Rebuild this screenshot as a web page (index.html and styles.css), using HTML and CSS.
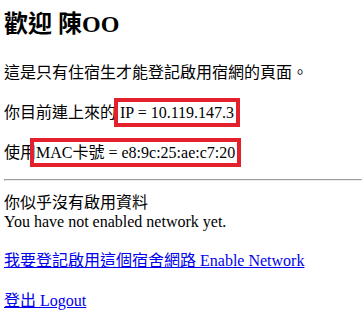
FILE: index.html
```html
<!DOCTYPE html>
<html lang="zh-Hant">
<head>
  <meta charset="UTF-8" />
  <title>宿網登記</title>
  <link rel="stylesheet" href="styles.css">
</head>
<body>

  <h2 class="welcome">歡迎 陳OO</h2>

  <p>這是只有住宿生才能登記啟用宿網的頁面。</p>

  <p>你目前連上來的 <span class="mark">IP = 10.119.147.3</span></p>

  <p>使用<span class="mark">MAC卡號 = e8:9c:25:ae:c7:20</span></p>

  <hr>

  <div class="notice">你似乎沒有啟用資料<br>You have not enabled network yet.</div>

  <p><a href="#">我要登記啟用這個宿舍網路 Enable Network</a></p>

  <p><a href="#">登出 Logout</a></p>

</body>
</html>
```

FILE: styles.css
```css
body {
  margin: 0 0 0 4px;
  font-family: "Liberation Serif", "Noto Sans CJK TC", serif;
  font-size: 16px;
  color: #000;
  background: #fff;
}

.welcome {
  font-size: 24px;
  margin: 4px 0 20px;
}

p {
  margin: 16px 0;
}

/* red highlight round the address values */
.mark {
  outline: 4px solid #e4202c;
  outline-offset: 2px;
}

hr {
  margin: 8px 0;
}

a {
  color: #0000ee;
}
```
